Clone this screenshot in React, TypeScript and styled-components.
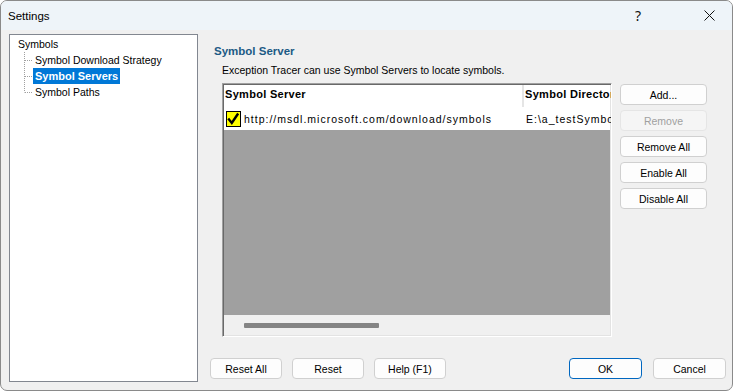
import React from "react";
import styled, { createGlobalStyle } from "styled-components";

const Global = createGlobalStyle`
  html, body { margin: 0; padding: 0; background: #ffffff; }
  * { box-sizing: border-box; }
  body { font-family: "Liberation Sans", Arial, sans-serif; font-size: 10.5px; color: #000; }
`;

const Window = styled.div`
  width: 733px;
  height: 391px;
  border: 1px solid #8a8a8a;
  border-radius: 7px;
  overflow: hidden;
  background: #f0f0f0;
  display: flex;
  flex-direction: column;
`;

const TitleBar = styled.div`
  height: 29px;
  background: #eef4f9;
  display: flex;
  align-items: center;
  padding-left: 7px;
  font-size: 11.5px;
`;

const TitleText = styled.div`
  flex: 1;
`;

const TitleButton = styled.div<{ $gap?: number }>`
  width: 46px;
  height: 29px;
  margin-left: ${(p) => p.$gap ?? 0}px;
  display: flex;
  align-items: center;
  justify-content: center;
  font-family: "Noto Sans", "Liberation Sans", sans-serif;
  font-size: 14px;
  color: #111;
`;

const Body = styled.div`
  flex: 1;
  display: flex;
  padding: 4px 0 0 8px;
`;

const Tree = styled.div`
  width: 189px;
  height: 348px;
  background: #fff;
  border: 1px solid #828790;
  padding: 1px 0 0 6px;
`;

const TreeRow = styled.div`
  height: 16px;
  display: flex;
  align-items: center;
  line-height: 16px;
`;

const ChildRow = styled(TreeRow)`
  padding-left: 7px;
`;

const TreeLabel = styled.span<{ $selected?: boolean }>`
  padding: 0 2px;
  height: 16px;
  line-height: 16px;
  background: ${(p) => (p.$selected ? "#0078d7" : "transparent")};
  color: ${(p) => (p.$selected ? "#fff" : "#000")};
  font-weight: ${(p) => (p.$selected ? "bold" : "normal")};
  font-size: ${(p) => (p.$selected ? "11px" : "10.5px")};
`;

const Right = styled.div`
  margin-left: 12px;
  width: 516px;
  display: flex;
  flex-direction: column;
`;

const Heading = styled.div`
  margin-top: 9px;
  padding-left: 4px;
  height: 16px;
  line-height: 16px;
  font-size: 11.5px;
  font-weight: bold;
  color: #1c5a85;
`;

const Desc = styled.div`
  margin-top: 3px;
  padding-left: 12px;
  height: 16px;
  line-height: 16px;
`;

const ListArea = styled.div`
  margin-top: 5px;
  display: flex;
  padding-left: 12px;
`;

const List = styled.div`
  width: 390px;
  height: 254px;
  border-top: 1px solid #a0a0a0;
  border-left: 1px solid #a0a0a0;
  border-right: 1px solid #fff;
  border-bottom: 1px solid #fff;
  box-shadow: inset 1px 1px 0 #696969, inset -1px -1px 0 #e3e3e3;
  padding: 1px;
  display: flex;
  flex-direction: column;
  overflow: hidden;
`;

const HeaderRow = styled.div`
  height: 22px;
  display: flex;
  background: #fff;
  font-weight: bold;
  font-size: 11px;
  letter-spacing: 0.3px;
  flex-shrink: 0;
`;

const HeaderCell = styled.div<{ $w: number }>`
  width: ${(p) => p.$w}px;
  flex-shrink: 0;
  padding: 2px 0 0 1px;
  line-height: 14px;
  white-space: nowrap;
  overflow: hidden;
  border-right: 2px solid #e5e5e5;
  &:last-child { border-right: none; }
`;

const DataRow = styled.div`
  height: 23px;
  display: flex;
  background: #fff;
  flex-shrink: 0;
  letter-spacing: 1px;
`;

const DataCell = styled.div<{ $w: number }>`
  width: ${(p) => p.$w}px;
  flex-shrink: 0;
  display: flex;
  align-items: center;
  white-space: nowrap;
  overflow: hidden;
  gap: 3px;
  padding-left: 2px;
`;

const Empty = styled.div`
  flex: 1;
  background: #a0a0a0;
`;

const HScroll = styled.div`
  height: 20px;
  flex-shrink: 0;
  background: #f0f0f0;
  display: flex;
  align-items: center;
  padding-left: 20px;
`;

const Thumb = styled.div`
  width: 135px;
  height: 5px;
  border-radius: 1px;
  background: #858585;
  margin-top: 1px;
`;

const SideButtons = styled.div`
  margin-left: 8px;
  padding-top: 1px;
  display: flex;
  flex-direction: column;
  gap: 5px;
`;

const Button = styled.button<{ $w?: number; $default?: boolean }>`
  width: ${(p) => p.$w ?? 87}px;
  height: 21px;
  padding: 0;
  font-family: "Liberation Sans", Arial, sans-serif;
  font-size: 10.5px;
  color: #000;
  background: #fdfdfd;
  border: 1px solid ${(p) => (p.$default ? "#0067c0" : "#d0d0d0")};
  border-radius: 4px;
  &:disabled {
    color: #a0a0a0;
    background: #f5f5f5;
    border-color: #e5e5e5;
  }
`;

const BottomBar = styled.div`
  margin-top: 21px;
  display: flex;
  align-items: center;
  gap: 10px;
`;

const Spacer = styled.div`
  flex: 1;
`;

const OkGroup = styled.div`
  display: flex;
  gap: 11px;
`;

const Connector = ({ last }: { last?: boolean }) => (
  <svg width="10" height="16" viewBox="0 0 10 16" style={{ flexShrink: 0 }}>
    <line x1="1.5" y1="0" x2="1.5" y2={last ? 8.5 : 16} stroke="#a0a0a0" strokeDasharray="1 1" />
    <line x1="2" y1="8.5" x2="10" y2="8.5" stroke="#a0a0a0" strokeDasharray="1 1" />
  </svg>
);

const Check = () => (
  <svg width="15" height="16" viewBox="0 0 15 16" style={{ flexShrink: 0 }}>
    <rect x="0.5" y="0.5" width="14" height="15" fill="#ffff00" stroke="#000" />
    <path d="M3 8.5 L5.8 12 L11.5 3.5" fill="none" stroke="#000" strokeWidth="2.4" strokeLinecap="square" />
  </svg>
);

export default function App() {
  return (
    <>
      <Global />
      <Window>
        <TitleBar>
          <TitleText>Settings</TitleText>
          <TitleButton>?</TitleButton>
          <TitleButton $gap={25}>
            <svg width="11" height="11" viewBox="0 0 11 11">
              <path d="M0.5 0.5 L10.5 10.5 M10.5 0.5 L0.5 10.5" stroke="#111" strokeWidth="1" />
            </svg>
          </TitleButton>
        </TitleBar>
        <Body>
          <Tree>
            <TreeRow>
              <TreeLabel>Symbols</TreeLabel>
            </TreeRow>
            <ChildRow>
              <Connector />
              <TreeLabel>Symbol Download Strategy</TreeLabel>
            </ChildRow>
            <ChildRow>
              <Connector />
              <TreeLabel $selected>Symbol Servers</TreeLabel>
            </ChildRow>
            <ChildRow>
              <Connector last />
              <TreeLabel>Symbol Paths</TreeLabel>
            </ChildRow>
          </Tree>
          <Right>
            <Heading>Symbol Server</Heading>
            <Desc>Exception Tracer can use Symbol Servers to locate symbols.</Desc>
            <ListArea>
              <List>
                <HeaderRow>
                  <HeaderCell $w={300}>Symbol Server</HeaderCell>
                  <HeaderCell $w={120}>Symbol Directory</HeaderCell>
                </HeaderRow>
                <DataRow>
                  <DataCell $w={300}>
                    <Check />
                    <span>http://msdl.microsoft.com/download/symbols</span>
                  </DataCell>
                  <DataCell $w={120}>E:\a_testSymbols</DataCell>
                </DataRow>
                <Empty />
                <HScroll>
                  <Thumb />
                </HScroll>
              </List>
              <SideButtons>
                <Button>Add...</Button>
                <Button disabled>Remove</Button>
                <Button>Remove All</Button>
                <Button>Enable All</Button>
                <Button>Disable All</Button>
              </SideButtons>
            </ListArea>
            <BottomBar>
              <Button $w={72}>Reset All</Button>
              <Button $w={72}>Reset</Button>
              <Button $w={72}>Help (F1)</Button>
              <Spacer />
              <OkGroup>
                <Button $w={73} $default>OK</Button>
                <Button $w={73}>Cancel</Button>
              </OkGroup>
            </BottomBar>
          </Right>
        </Body>
      </Window>
    </>
  );
}
